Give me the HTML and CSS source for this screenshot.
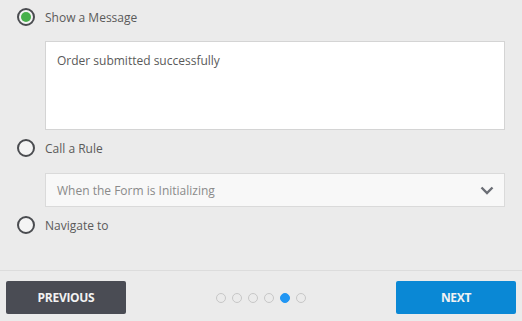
FILE: index.html
```html
<!DOCTYPE html>
<html lang="en">
<head>
    <meta charset="UTF-8">
    <meta name="viewport" content="width=device-width, initial-scale=1.0">
    <title>Action</title>
    <link rel="stylesheet" href="styles.css">
</head>
<body>
    <div class="panel">
        <div class="options">
            <label class="option">
                <span class="radio checked"></span>
                <span class="label">Show a Message</span>
            </label>
            <div class="message">Order submitted successfully</div>

            <label class="option">
                <span class="radio"></span>
                <span class="label">Call a Rule</span>
            </label>
            <div class="select">
                <span>When the Form is Initializing</span>
                <svg class="chevron" width="14" height="9" viewBox="0 0 14 9">
                    <path d="M1.5 1.5 L7 7 L12.5 1.5" fill="none" stroke="#6b6e75" stroke-width="2.4"/>
                </svg>
            </div>

            <label class="option">
                <span class="radio"></span>
                <span class="label">Navigate to</span>
            </label>
        </div>

        <div class="footer">
            <button class="btn prev">PREVIOUS</button>
            <div class="dots">
                <span class="dot"></span>
                <span class="dot"></span>
                <span class="dot"></span>
                <span class="dot"></span>
                <span class="dot active"></span>
                <span class="dot"></span>
            </div>
            <button class="btn next">NEXT</button>
        </div>
    </div>
</body>
</html>
```

FILE: styles.css
```css
body {
    margin: 0;
    background-color: #ebebeb;
    font-family: "Open Sans", "DejaVu Sans", sans-serif;
    font-size: 12px;
    color: #5a5a5a;
    overflow: hidden;
}
.panel {
    width: 522px;
    height: 321px;
    display: flex;
    flex-direction: column;
}
.options {
    flex: 1;
    padding: 8px 17px 0 17px;
}
.option {
    display: flex;
    align-items: center;
    gap: 10px;
    height: 18px;
}
.radio {
    box-sizing: border-box;
    width: 18px;
    height: 18px;
    border: 2px solid #4a4c50;
    border-radius: 50%;
    background: #f4f4f4;
    display: flex;
    align-items: center;
    justify-content: center;
}
.radio.checked::after {
    content: "";
    width: 10px;
    height: 10px;
    border-radius: 50%;
    background: #47b04b;
}
.message {
    box-sizing: border-box;
    margin: 15px 0 9px 28px;
    height: 89px;
    width: 460px;
    background: #fff;
    border: 1px solid #d4d4d4;
    padding: 10px 11px;
}
.select {
    box-sizing: border-box;
    margin: 16px 0 9px 28px;
    height: 34px;
    width: 460px;
    background: #f8f8f8;
    border: 1px solid #dadada;
    padding: 0 10px 0 11px;
    display: flex;
    align-items: center;
    justify-content: space-between;
    color: #8a8a8a;
}
.footer {
    border-top: 1px solid #dcdcdc;
    height: 51px;
    padding: 10px 6px 0 6px;
    box-sizing: border-box;
    display: flex;
    align-items: flex-start;
    justify-content: space-between;
}
.btn {
    width: 120px;
    height: 33px;
    border: none;
    border-radius: 2px;
    font-family: "Open Sans", "DejaVu Sans", sans-serif;
    font-weight: bold;
    font-size: 12px;
    letter-spacing: -0.3px;
    color: #f2f2f2;
    cursor: pointer;
}
.prev {
    background-color: #4a4c54;
}
.next {
    background-color: #0a88d5;
}
.dots {
    display: flex;
    gap: 6px;
    margin-top: 12px;
}
.dot {
    box-sizing: border-box;
    width: 10px;
    height: 10px;
    border: 1.5px solid #c7c7c7;
    border-radius: 50%;
}
.dot.active {
    background: #2196f3;
    border-color: #2196f3;
}
```
